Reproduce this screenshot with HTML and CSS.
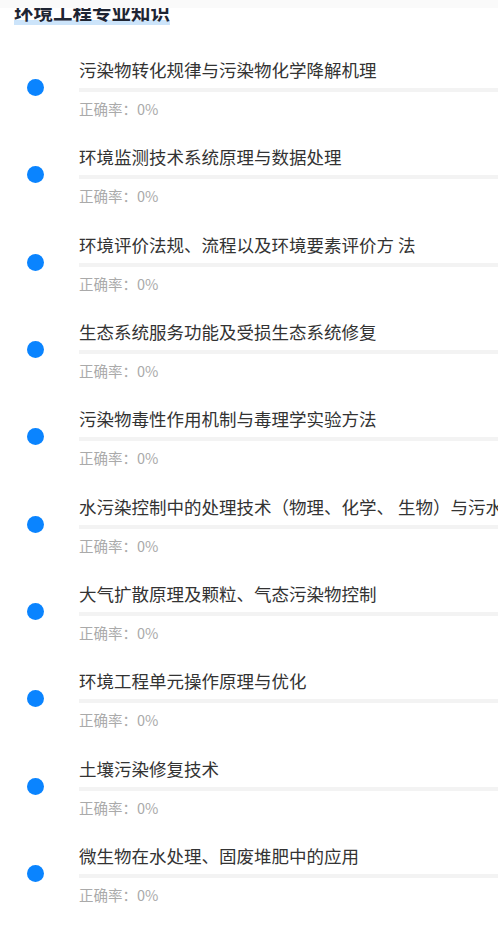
FILE: index.html
```html
<!DOCTYPE html>
<html lang="zh">
<head>
<meta charset="utf-8">
<link rel="stylesheet" href="styles.css">
</head>
<body>
<div class="topbar"></div>
<div class="page">
  <h1 class="heading"><span class="heading-text">环境工程专业知识</span></h1>
  <ul class="list">
    <li class="item"><span class="dot"></span><div class="content"><div class="title">污染物转化规律与污染物化学降解机理</div><div class="bar"></div><div class="rate">正确率：0%</div></div></li>
    <li class="item"><span class="dot"></span><div class="content"><div class="title">环境监测技术系统原理与数据处理</div><div class="bar"></div><div class="rate">正确率：0%</div></div></li>
    <li class="item"><span class="dot"></span><div class="content"><div class="title">环境评价法规、流程以及环境要素评价方 法</div><div class="bar"></div><div class="rate">正确率：0%</div></div></li>
    <li class="item"><span class="dot"></span><div class="content"><div class="title">生态系统服务功能及受损生态系统修复</div><div class="bar"></div><div class="rate">正确率：0%</div></div></li>
    <li class="item"><span class="dot"></span><div class="content"><div class="title">污染物毒性作用机制与毒理学实验方法</div><div class="bar"></div><div class="rate">正确率：0%</div></div></li>
    <li class="item"><span class="dot"></span><div class="content"><div class="title">水污染控制中的处理技术（物理、化学、 生物）与污水资源化</div><div class="bar"></div><div class="rate">正确率：0%</div></div></li>
    <li class="item"><span class="dot"></span><div class="content"><div class="title">大气扩散原理及颗粒、气态污染物控制</div><div class="bar"></div><div class="rate">正确率：0%</div></div></li>
    <li class="item"><span class="dot"></span><div class="content"><div class="title">环境工程单元操作原理与优化</div><div class="bar"></div><div class="rate">正确率：0%</div></div></li>
    <li class="item"><span class="dot"></span><div class="content"><div class="title">土壤污染修复技术</div><div class="bar"></div><div class="rate">正确率：0%</div></div></li>
    <li class="item"><span class="dot"></span><div class="content"><div class="title">微生物在水处理、固废堆肥中的应用</div><div class="bar"></div><div class="rate">正确率：0%</div></div></li>
  </ul>
</div>
</body>
</html>
```
FILE: styles.css
```css
html, body {
  margin: 0;
  padding: 0;
  background: #ffffff;
  overflow: hidden;
}
body {
  font-family: "Noto Sans CJK SC", "Noto Sans", sans-serif;
  color: #333333;
}
.topbar {
  position: fixed;
  top: 0;
  left: 0;
  right: 0;
  height: 8px;
  background: #fafafa;
  z-index: 2;
}
.page {
  padding: 0;
}
.heading {
  margin: 0;
  padding: 0 0 0 14px;
  font-size: 19.5px;
  line-height: 24px;
  font-weight: 700;
  color: #1f2533;
}
.heading-text {
  position: relative;
  z-index: 0;
  display: inline-block;
  margin-top: -2px;
}
.heading-text::after {
  content: "";
  position: absolute;
  left: 0;
  right: 0;
  bottom: -1px;
  height: 5px;
  background: #cce4fa;
  z-index: -1;
}
.list {
  list-style: none;
  margin: 35px 0 0 0;
  padding: 0;
}
.item {
  display: flex;
  align-items: flex-start;
  padding: 0 0 27.33px 27px;
}
.dot {
  flex: none;
  width: 17px;
  height: 17px;
  border-radius: 50%;
  background: #0a84ff;
  margin-top: 20px;
  margin-right: 35px;
}
.content {
  flex: 1;
  min-width: 0;
}
.title {
  font-size: 17.5px;
  line-height: 22px;
  color: #333333;
  white-space: nowrap;
  overflow: hidden;
}
.bar {
  margin-top: 7px;
  height: 4px;
  background: #f3f3f3;
}
.rate {
  margin-top: 7px;
  font-size: 14.5px;
  line-height: 20px;
  color: #aaaaaa;
}
```
